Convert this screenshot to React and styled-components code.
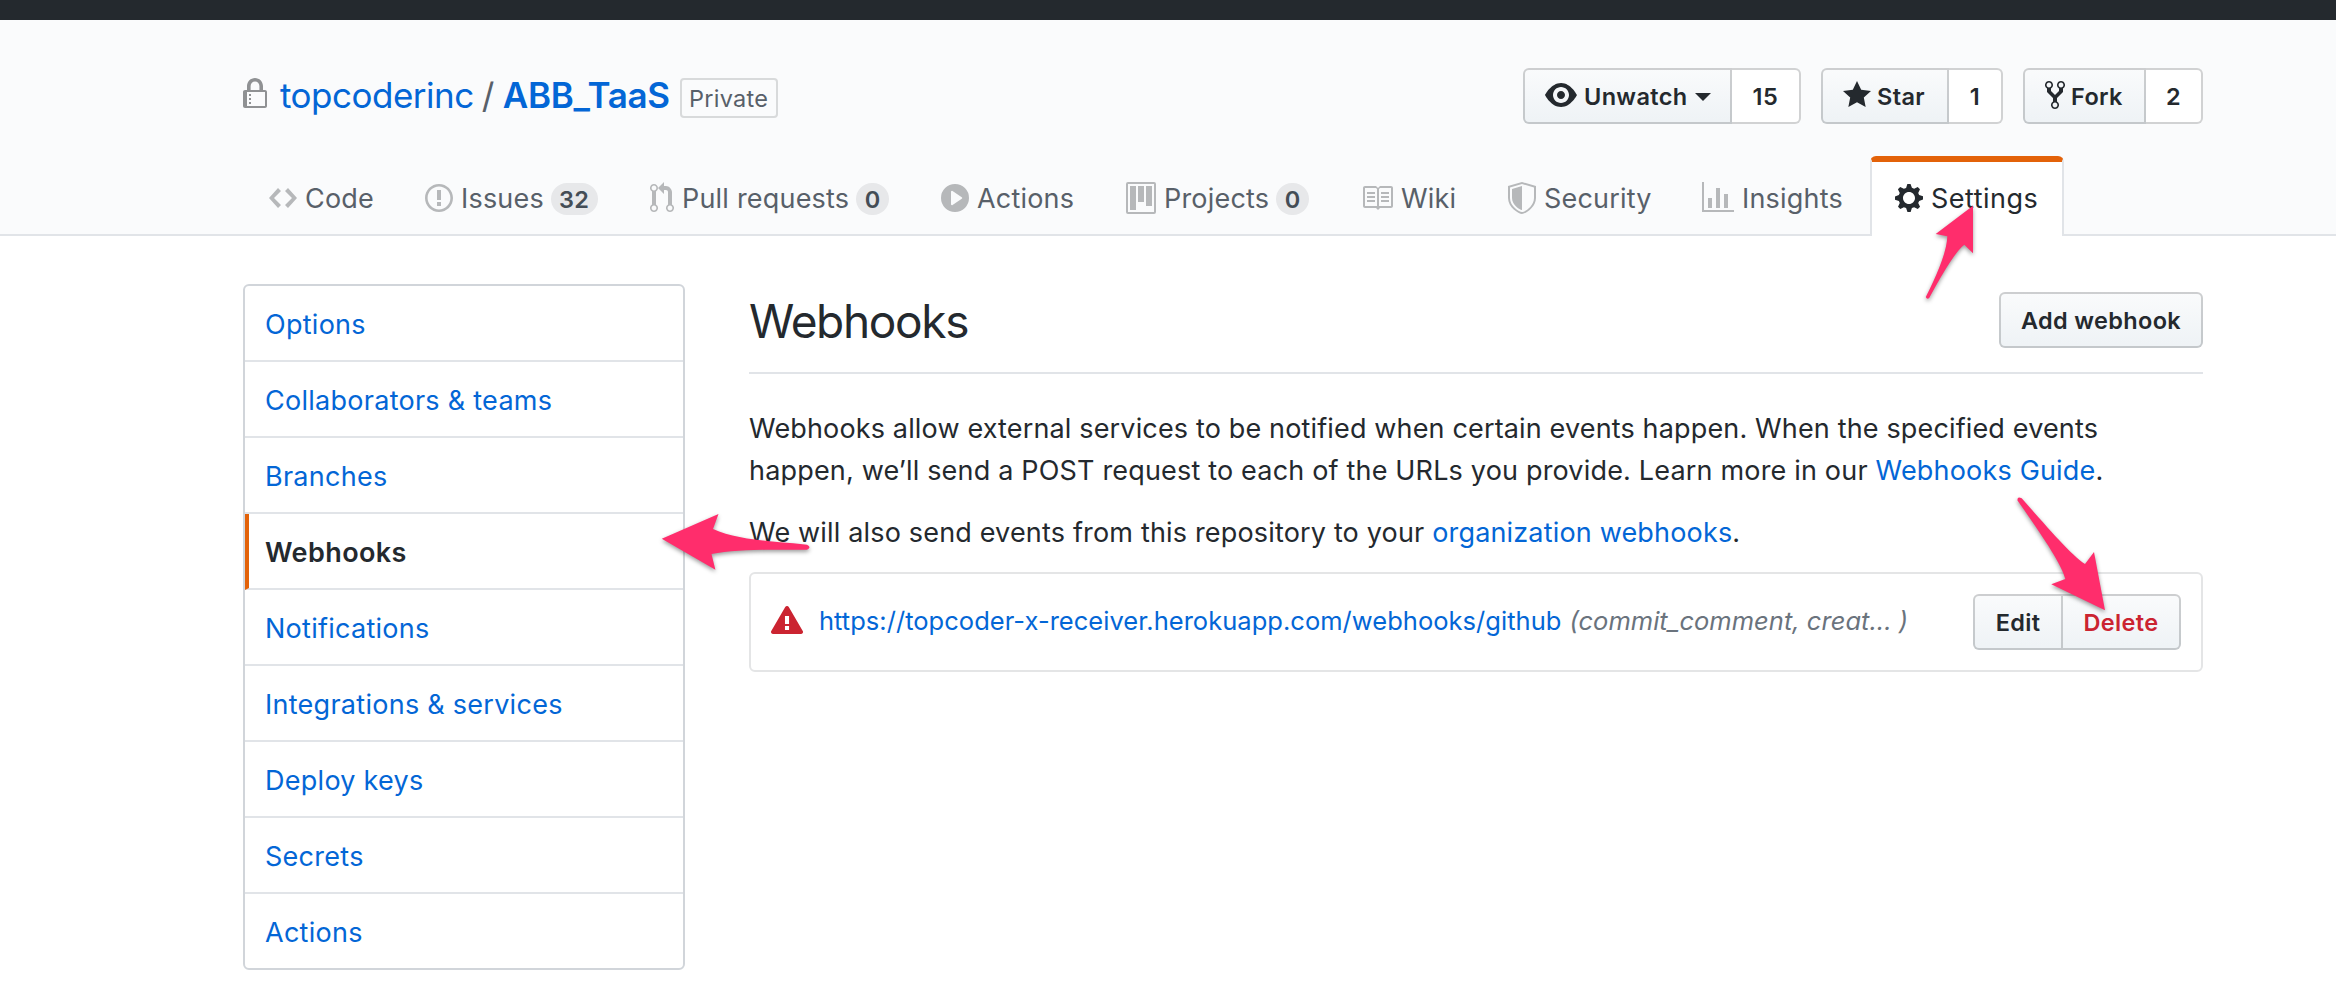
import React from "react";
import styled, { createGlobalStyle, css } from "styled-components";

const GlobalStyle = createGlobalStyle`
  * { box-sizing: border-box; }
  body {
    margin: 0;
    background: #fff;
    color: #24292e;
    font-family: Inter, "Liberation Sans", sans-serif;
    font-size: 27px;
    line-height: 42px;
    white-space: nowrap;
  }
  svg { display: block; flex: none; }
`;

const ICONS = {
  lock: [12, "M4 13H3v-1h1v1zm8-6v7c0 .55-.45 1-1 1H1c-.55 0-1-.45-1-1V7c0-.55.45-1 1-1h1V4c0-2.2 1.8-4 4-4s4 1.8 4 4v2h1c.55 0 1 .45 1 1zM3.8 6h4.41V4c0-1.22-.98-2.2-2.2-2.2-1.22 0-2.2.98-2.2 2.2v2H3.8zM11 7H2v7h9V7zM4 8H3v1h1V8zm0 2H3v1h1v-1z"],
  code: [14, "M9.5 3L8 4.5 11.5 8 8 11.5 9.5 13 14 8 9.5 3zm-5 0L0 8l4.5 5L6 11.5 2.5 8 6 4.5 4.5 3z"],
  issue: [14, "M7 2.3c3.14 0 5.7 2.56 5.7 5.7s-2.56 5.7-5.7 5.7A5.71 5.71 0 0 1 1.3 8c0-3.14 2.56-5.7 5.7-5.7zM7 1C3.14 1 0 4.14 0 8s3.14 7 7 7 7-3.14 7-7-3.14-7-7-7zm1 3H6v5h2V4zm0 6H6v2h2v-2z"],
  pull: [12, "M11 11.28V5c-.03-.78-.34-1.47-.94-2.06C9.46 2.35 8.78 2.03 8 2H7V0L4 3l3 3V4h1c.27.02.48.11.69.31.21.2.3.42.31.69v6.28A1.993 1.993 0 0 0 10 15a1.993 1.993 0 0 0 1-3.72zm-1 2.92c-.66 0-1.2-.55-1.2-1.2 0-.65.55-1.2 1.2-1.2.65 0 1.2.55 1.2 1.2 0 .65-.55 1.2-1.2 1.2zM4 3c0-1.11-.89-2-2-2a1.993 1.993 0 0 0-1 3.72v6.56A1.993 1.993 0 0 0 2 15a1.993 1.993 0 0 0 1-3.72V4.72c.59-.34 1-.98 1-1.72zm-.8 10c0 .66-.55 1.2-1.2 1.2-.65 0-1.2-.55-1.2-1.2 0-.65.55-1.2 1.2-1.2.65 0 1.2.55 1.2 1.2zM2 4.2C1.34 4.2.8 3.65.8 3c0-.65.55-1.2 1.2-1.2.65 0 1.2.55 1.2 1.2 0 .65-.55 1.2-1.2 1.2z"],
  play: [14, "M14 8A7 7 0 1 1 0 8a7 7 0 0 1 14 0zm-8.223 3.482l4.599-3.066a.5.5 0 0 0 0-.832L5.777 4.518A.5.5 0 0 0 5 4.934v6.132a.5.5 0 0 0 .777.416z"],
  project: [15, "M10 12h3V2h-3v10zm-4-2h3V2H6v8zm-4 4h3V2H2v12zm-1 1h13V1H1v14zM14 0H1a1 1 0 0 0-1 1v14a1 1 0 0 0 1 1h13a1 1 0 0 0 1-1V1a1 1 0 0 0-1-1z"],
  book: [16, "M3 5h4v1H3V5zm0 3h4V7H3v1zm0 2h4V9H3v1zm11-5h-4v1h4V5zm0 2h-4v1h4V7zm0 2h-4v1h4V9zm2-6v9c0 .55-.45 1-1 1H9.5l-1 1-1-1H2c-.55 0-1-.45-1-1V3c0-.55.45-1 1-1h5.5l1 1 1-1H15c.55 0 1 .45 1 1zm-8 .5L7.5 3H2v9h6V3.5zm7-.5H9.5l-.5.5V12h6V3z"],
  shield: [14, "M0 2l7-2 7 2v6.02C14 12.69 8.69 16 7 16c-1.69 0-7-3.31-7-7.98V2zm1 .75L7 1l6 1.75v5.268C13 12.104 8.449 15 7 15c-1.449 0-6-2.896-6-6.982V2.75zm1 .75L7 2v12c-1.207 0-5-2.482-5-5.985V3.5z"],
  graph: [16, "M16 14v1H0V0h1v14h15zM5 13H3V8h2v5zm4 0H7V3h2v10zm4 0h-2V6h2v7z"],
  gear: [14, "M14 8.77v-1.6l-1.94-.64-.45-1.09.88-1.84-1.13-1.13-1.81.91-1.09-.45-.69-1.92h-1.6l-.63 1.94-1.11.45-1.84-.88-1.13 1.13.91 1.81-.45 1.09L0 7.23v1.59l1.94.64.45 1.09-.88 1.84 1.13 1.13 1.81-.91 1.09.45.69 1.92h1.59l.63-1.94 1.11-.45 1.84.88 1.13-1.13-.92-1.81.47-1.09L14 8.75v.02zM7 11c-1.66 0-3-1.34-3-3s1.34-3 3-3 3 1.34 3 3-1.34 3-3 3z"],
  eye: [16, "M8.06 2C3 2 0 8 0 8s3 6 8.06 6C13 14 16 8 16 8s-3-6-7.94-6zM8 12c-2.2 0-4-1.78-4-4 0-2.2 1.8-4 4-4 2.22 0 4 1.8 4 4 0 2.22-1.78 4-4 4zm2-4c0 1.11-.89 2-2 2-1.11 0-2-.89-2-2 0-1.11.89-2 2-2 1.11 0 2 .89 2 2z"],
  star: [14, "M14 6l-4.9-.64L7 1 4.9 5.36 0 6l3.6 3.26L2.67 14 7 11.67 11.33 14l-.93-4.74L14 6z"],
  fork: [10, "M8 1a1.993 1.993 0 0 0-1 3.72V6L5 8 3 6V4.72A1.993 1.993 0 0 0 2 1a1.993 1.993 0 0 0-1 3.72V6.5l3 3v1.78A1.993 1.993 0 0 0 5 15a1.993 1.993 0 0 0 1-3.72V9.5l3-3V4.72A1.993 1.993 0 0 0 8 1zM2 4.2C1.34 4.2.8 3.65.8 3c0-.65.55-1.2 1.2-1.2.65 0 1.2.55 1.2 1.2 0 .65-.55 1.2-1.2 1.2zm3 10c-.66 0-1.2-.55-1.2-1.2 0-.65.55-1.2 1.2-1.2.65 0 1.2.55 1.2 1.2 0 .65-.55 1.2-1.2 1.2zm3-10c-.66 0-1.2-.55-1.2-1.2 0-.65.55-1.2 1.2-1.2.65 0 1.2.55 1.2 1.2 0 .65-.55 1.2-1.2 1.2z"],
  alert: [16, "M8.893 1.5c-.183-.31-.52-.5-.887-.5s-.703.19-.886.5L.138 13.499a.98.98 0 0 0 0 1.001c.193.31.53.501.886.501h13.964c.367 0 .704-.19.877-.5a1.03 1.03 0 0 0 .01-1.002L8.893 1.5zm.133 11.497H6.987v-2.003h2.039v2.003zm0-3.004H6.987V5.987h2.039v4.006z"],
};

function Icon({ name }) {
  const [w, d] = ICONS[name];
  return (
    <svg width={w * 2} height="32" viewBox={`0 0 ${w} 16`} aria-hidden="true">
      <path d={d} fill="currentColor" fillRule="evenodd" />
    </svg>
  );
}

const Page = styled.div`
  position: relative;
  min-height: 1002px;
  overflow: hidden;
`;
const TopBar = styled.div`
  height: 20px;
  background: #24292e;
`;
const Header = styled.header`
  height: 216px;
  padding-top: 48px;
  background: #fafbfc;
  border-bottom: 2px solid #e1e4e8;
`;
const Container = styled.div`
  width: 1960px;
  margin-left: 243px;
`;
const Link = styled.a`
  color: #0366d6;
  text-decoration: none;
`;

const HeadRow = styled.div`
  display: flex;
  align-items: center;
  justify-content: space-between;
  height: 56px;
`;
const RepoTitle = styled.h1`
  display: flex;
  align-items: center;
  margin: 0;
  padding-bottom: 2px;
  color: #586069;
  font-size: 35px;
  font-weight: 400;
  letter-spacing: -0.5px;
`;
const LockSlot = styled.span`
  margin: -2px 13px 0 0;
  color: #8f9193;
`;
const Slash = styled.span`
  margin: 0 9px 0 8px;
`;
const RepoName = styled(Link)`
  font-weight: 600;
  letter-spacing: -0.35px;
`;
const PrivateLabel = styled.span`
  width: 98px;
  height: 40px;
  margin: 6px 0 0 10px;
  border: 2px solid rgba(27, 31, 35, 0.15);
  border-radius: 4px;
  font-size: 23.5px;
  line-height: 38px;
  letter-spacing: 0.25px;
  text-align: center;
`;

const Actions = styled.div`
  display: flex;
  gap: 20px;
`;
const ButtonGroup = styled.div`
  display: flex;
`;
const Button = styled.button`
  display: flex;
  align-items: center;
  justify-content: ${(p) => (p.$start ? "flex-start" : "center")};
  gap: ${(p) => p.$gap || 6}px;
  width: ${(p) => p.$width}px;
  height: 56px;
  margin: 0;
  padding: 1px 0 0 ${(p) => (p.$start ? 20 : 0)}px;
  border: 2px solid rgba(27, 31, 35, 0.2);
  border-radius: 6px;
  background: #eff3f6 linear-gradient(-180deg, #fafbfc, #eff3f6 90%) repeat-x -2px -2px / 110% 110%;
  color: ${(p) => (p.$danger ? "#cb2431" : "#24292e")};
  font: 600 23.5px/36px Inter, "Liberation Sans", sans-serif;
  letter-spacing: 0.35px;
  ${(p) => p.$side === "left" && css`border-radius: 6px 0 0 6px;`}
  ${(p) => p.$side === "right" && css`border-left: 0; border-radius: 0 6px 6px 0;`}
  svg { margin-top: -3px; }
`;
const Count = styled.span`
  width: ${(p) => p.$width}px;
  height: 56px;
  border: 2px solid rgba(27, 31, 35, 0.2);
  border-left: 0;
  border-radius: 0 6px 6px 0;
  background: #fff;
  font-size: 23.5px;
  font-weight: 600;
  line-height: 53px;
  letter-spacing: 0.6px;
  text-align: center;
`;
const Caret = styled.span`
  margin: 1px 0 0 1px;
  border: 8px solid transparent;
  border-top-color: currentColor;
  border-bottom: 0;
`;

const Tabs = styled.nav`
  display: flex;
  margin-top: 32px;
`;
const Tab = styled.a`
  display: flex;
  align-items: center;
  gap: 8px;
  width: ${(p) => p.$width}px;
  height: 80px;
  padding: 4px 0 0 26px;
  color: #586069;
  letter-spacing: 0.2px;
  svg { color: #b6b8ba; }
  ${(p) =>
    p.$selected &&
    css`
      padding: 0 0 2px 23px;
      border: 2px solid #e1e4e8;
      border-top: 6px solid #e36209;
      border-bottom: 0;
      border-radius: 6px 6px 0 0;
      background: #fff;
      color: #24292e;
      letter-spacing: 0.5px;
      svg { color: #24292e; }
    `}
`;
const TabLabel = styled.span`
  margin-top: 2px;
`;
const Counter = styled.span`
  height: 32px;
  margin: 2px 0 0 -1px;
  padding: 0 ${(p) => (p.$narrow ? 8.5 : 8)}px;
  border-radius: 20px;
  background: #e7e8ea;
  color: #444d56;
  font-size: 23.5px;
  font-weight: 600;
  line-height: 33px;
  letter-spacing: 0.5px;
`;

const Body = styled.div`
  display: flex;
  align-items: flex-start;
  gap: 64px;
  padding-top: 48px;
`;
const Menu = styled.nav`
  width: 442px;
  border: 2px solid #d1d5da;
  border-radius: 6px;
`;
const MenuItem = styled.a`
  display: block;
  height: 76px;
  padding: 18px 0 0 ${(p) => (p.$active ? 16 : 20)}px;
  border-bottom: 2px solid #e1e4e8;
  border-left: ${(p) => (p.$active ? "4px solid #e36209" : "0")};
  color: ${(p) => (p.$active ? "#24292e" : "#0366d6")};
  font-weight: ${(p) => (p.$active ? 600 : 400)};
  letter-spacing: ${(p) => (p.$active ? 0.4 : 0.27)}px;
  &:last-child { height: 74px; border-bottom: 0; }
`;

const Main = styled.main`
  flex: 1;
`;
const Subhead = styled.div`
  display: flex;
  justify-content: space-between;
  height: 90px;
  padding-top: 8px;
  border-bottom: 2px solid #e1e4e8;
`;
const SubheadTitle = styled.h2`
  margin: 0;
  font-size: 46px;
  font-weight: 400;
  line-height: 58px;
  letter-spacing: -1.35px;
`;
const Paragraph = styled.p`
  margin: ${(p) => p.$top}px 0 0;
  letter-spacing: 0.17px;
`;
const Line = styled.span`
  display: block;
  letter-spacing: ${(p) => p.$tracking}px;
`;
const HookBox = styled.div`
  display: flex;
  align-items: center;
  height: 100px;
  margin-top: 18px;
  padding: 0 20px;
  border: 2px solid #e4e5e6;
  border-radius: 6px;
  font-size: 25.5px;
  letter-spacing: 0.03px;
`;
const AlertSlot = styled.span`
  margin: -4px 16px 0 0;
  color: #cb2431;
`;
const HookUrl = styled(Link)`
  margin-top: -2px;
`;
const HookEvents = styled.em`
  flex: 1;
  margin: -2px 0 0 8px;
  color: #6a737d;
`;

const Arrows = styled.svg`
  position: absolute;
  top: 0;
  left: 0;
  pointer-events: none;
  filter: drop-shadow(0 2px 2px rgba(0, 0, 0, 0.4));
`;

const TABS = [
  ["code", "Code", 156],
  ["issue", "Issues", 225, "32"],
  ["pull", "Pull requests", 291, "0"],
  ["play", "Actions", 185],
  ["project", "Projects", 235, "0"],
  ["book", "Wiki", 147],
  ["shield", "Security", 194],
  ["graph", "Insights", 194],
  ["gear", "Settings", 194],
];
const MENU = [
  "Options",
  "Collaborators & teams",
  "Branches",
  "Webhooks",
  "Notifications",
  "Integrations & services",
  "Deploy keys",
  "Secrets",
  "Actions",
];

export default function App() {
  return (
    <Page>
      <GlobalStyle />
      <TopBar />
      <Header>
        <Container>
          <HeadRow>
            <RepoTitle>
              <LockSlot><Icon name="lock" /></LockSlot>
              <Link>topcoderinc</Link>
              <Slash>/</Slash>
              <RepoName>ABB_TaaS</RepoName>
              <PrivateLabel>Private</PrivateLabel>
            </RepoTitle>
            <Actions>
              <ButtonGroup>
                <Button $start $side="left" $width={209} $gap={7}>
                  <Icon name="eye" />
                  <span>Unwatch</span>
                  <Caret />
                </Button>
                <Count $width={69}>15</Count>
              </ButtonGroup>
              <ButtonGroup>
                <Button $start $side="left" $width={128}>
                  <Icon name="star" />
                  <span>Star</span>
                </Button>
                <Count $width={54}>1</Count>
              </ButtonGroup>
              <ButtonGroup>
                <Button $start $side="left" $width={123}>
                  <Icon name="fork" />
                  <span>Fork</span>
                </Button>
                <Count $width={57}>2</Count>
              </ButtonGroup>
            </Actions>
          </HeadRow>
          <Tabs>
            {TABS.map(([icon, label, width, count]) => (
              <Tab key={label} $width={width} $selected={label === "Settings"}>
                <Icon name={icon} />
                <TabLabel>{label}</TabLabel>
                {count && <Counter $narrow={count.length === 1}>{count}</Counter>}
              </Tab>
            ))}
          </Tabs>
        </Container>
      </Header>
      <Container>
        <Body>
          <Menu>
            {MENU.map((label) => (
              <MenuItem key={label} $active={label === "Webhooks"}>{label}</MenuItem>
            ))}
          </Menu>
          <Main>
            <Subhead>
              <SubheadTitle>Webhooks</SubheadTitle>
              <Button $width={204}>Add webhook</Button>
            </Subhead>
            <Paragraph $top={34}>
              <Line $tracking={0.15}>
                Webhooks allow external services to be notified when certain events happen. When the specified events
              </Line>
              <Line $tracking={0.18}>
                happen, we’ll send a POST request to each of the URLs you provide. Learn more in our{" "}
                <Link>Webhooks Guide</Link>.
              </Line>
            </Paragraph>
            <Paragraph $top={20}>
              We will also send events from this repository to your <Link>organization webhooks</Link>.
            </Paragraph>
            <HookBox>
              <AlertSlot><Icon name="alert" /></AlertSlot>
              <HookUrl>https://topcoder-x-receiver.herokuapp.com/webhooks/github</HookUrl>
              <HookEvents>(commit_comment, creat... )</HookEvents>
              <ButtonGroup>
                <Button $side="left" $width={90}>Edit</Button>
                <Button $side="right" $danger $width={118}>Delete</Button>
              </ButtonGroup>
            </HookBox>
          </Main>
        </Body>
      </Container>
      <Arrows width="2336" height="1002" viewBox="0 0 2336 1002" fill="#ff2d6c">
        <path d="M1973 205.7 L1973 253.3 L1964.3 244.7 Q1954 252 1929.2 298 Q1927 300 1925.8 297 Q1947 255 1947.3 236.3 L1935.7 234 Z" />
        <path d="M661.8 538.7 L718.5 514 L713 529 C737 540 770 541 807 544.7 Q812 547 807 549.8 C770 549.5 735 549 711.5 554 L715.4 569.7 Z" />
        <path d="M2105 610.3 L2094 552 L2085 564 C2071 555 2048 528 2021.7 498.3 Q2017 496 2017.5 500.5 C2039 531 2062 564 2065.3 579 L2051.3 584.3 Z" />
      </Arrows>
    </Page>
  );
}
